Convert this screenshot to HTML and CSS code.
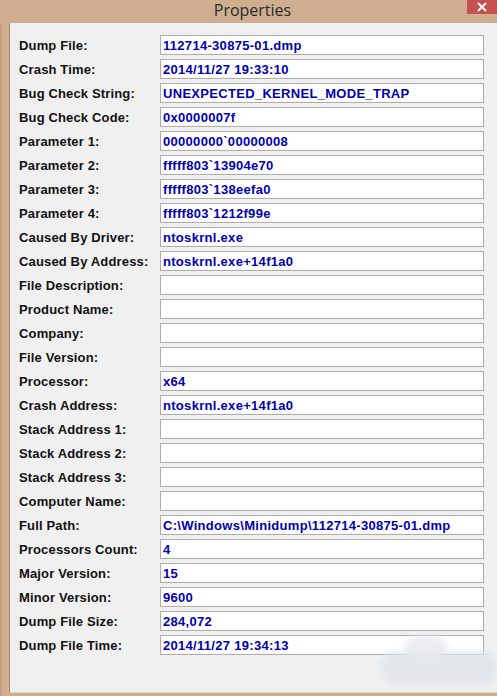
FILE: index.html
```html
<!DOCTYPE html>
<html>
<head>
<meta charset="utf-8">
<link rel="stylesheet" href="styles.css">
</head>
<body>
<div class="window">
  <div class="titlebar">
    <span class="title">Properties</span>
    <div class="close"><svg width="12" height="10" viewBox="0 0 12 10"><path d="M2 1 L10 9 M10 1 L2 9" stroke="#fff" stroke-width="2"/></svg></div>
  </div>
  <div class="body">
    <div class="panel">
      <div class="rows">
        <div class="label">Dump File:</div><div class="field">112714-30875-01.dmp</div>
        <div class="label">Crash Time:</div><div class="field">2014/11/27 19:33:10</div>
        <div class="label">Bug Check String:</div><div class="field">UNEXPECTED_KERNEL_MODE_TRAP</div>
        <div class="label">Bug Check Code:</div><div class="field">0x0000007f</div>
        <div class="label">Parameter 1:</div><div class="field">00000000`00000008</div>
        <div class="label">Parameter 2:</div><div class="field">fffff803`13904e70</div>
        <div class="label">Parameter 3:</div><div class="field">fffff803`138eefa0</div>
        <div class="label">Parameter 4:</div><div class="field">fffff803`1212f99e</div>
        <div class="label">Caused By Driver:</div><div class="field">ntoskrnl.exe</div>
        <div class="label">Caused By Address:</div><div class="field">ntoskrnl.exe+14f1a0</div>
        <div class="label">File Description:</div><div class="field"></div>
        <div class="label">Product Name:</div><div class="field"></div>
        <div class="label">Company:</div><div class="field"></div>
        <div class="label">File Version:</div><div class="field"></div>
        <div class="label">Processor:</div><div class="field">x64</div>
        <div class="label">Crash Address:</div><div class="field">ntoskrnl.exe+14f1a0</div>
        <div class="label">Stack Address 1:</div><div class="field"></div>
        <div class="label">Stack Address 2:</div><div class="field"></div>
        <div class="label">Stack Address 3:</div><div class="field"></div>
        <div class="label">Computer Name:</div><div class="field"></div>
        <div class="label">Full Path:</div><div class="field">C:\Windows\Minidump\112714-30875-01.dmp</div>
        <div class="label">Processors Count:</div><div class="field">4</div>
        <div class="label">Major Version:</div><div class="field">15</div>
        <div class="label">Minor Version:</div><div class="field">9600</div>
        <div class="label">Dump File Size:</div><div class="field">284,072</div>
        <div class="label">Dump File Time:</div><div class="field">2014/11/27 19:34:13</div>
      </div>
      <div class="watermark"></div>
      <div class="watermark2"></div>
    </div>
  </div>
</div>
</body>
</html>
```
FILE: styles.css
```css
html, body {
  margin: 0;
  padding: 0;
}
body {
  width: 497px;
  height: 696px;
  overflow: hidden;
  background: #cfae8f;
  font-family: "Liberation Sans", Arial, sans-serif;
}
.window {
  display: flex;
  flex-direction: column;
  height: 696px;
}
.titlebar {
  height: 23px;
  position: relative;
  display: flex;
  justify-content: center;
  align-items: center;
}
.title {
  font-family: "Open Sans", "Noto Sans", sans-serif;
  font-size: 16px;
  color: #2b2b2b;
  margin-left: 8px;
  margin-top: -4px;
}
.close {
  position: absolute;
  right: 0;
  top: 0;
  width: 30px;
  height: 14px;
  background: #c75050;
  display: flex;
  align-items: center;
  justify-content: center;
}
.body {
  flex: 1;
  padding-left: 7px;
  padding-bottom: 3px;
  background: #cfae8f;
  border-left: 2px solid #c29f80;
}
.panel {
  position: relative;
  height: 670px;
  background: #f0f0f0;
  border-left: 1px solid #a98a6d;
  border-bottom: 1px solid #e7d2bd;
  box-sizing: border-box;
  padding-top: 12px;
  padding-left: 8px;
}
.rows {
  display: grid;
  grid-template-columns: 142px 324px;
  grid-auto-rows: 20px;
  row-gap: 4px;
}
.label {
  font-size: 13px;
  font-weight: bold;
  color: #111;
  line-height: 21px;
  padding-left: 1px;
  letter-spacing: 0.15px;
  white-space: nowrap;
}
.field {
  background: #fff;
  border: 1px solid #adadad;
  box-sizing: border-box;
  font-size: 13px;
  font-weight: bold;
  color: #0000b4;
  line-height: 19px;
  padding-left: 2px;
  letter-spacing: 0.3px;
  white-space: nowrap;
  overflow: hidden;
}
.watermark {
  position: absolute;
  left: 370px;
  top: 628px;
  width: 118px;
  height: 34px;
  background: #dfe4ea;
  border-radius: 16px;
  filter: blur(3px);
  opacity: 0.75;
}
.watermark2 {
  position: absolute;
  left: 395px;
  top: 613px;
  width: 42px;
  height: 26px;
  background: #e6e9ed;
  border-radius: 14px;
  filter: blur(3px);
  opacity: 0.8;
}
```
